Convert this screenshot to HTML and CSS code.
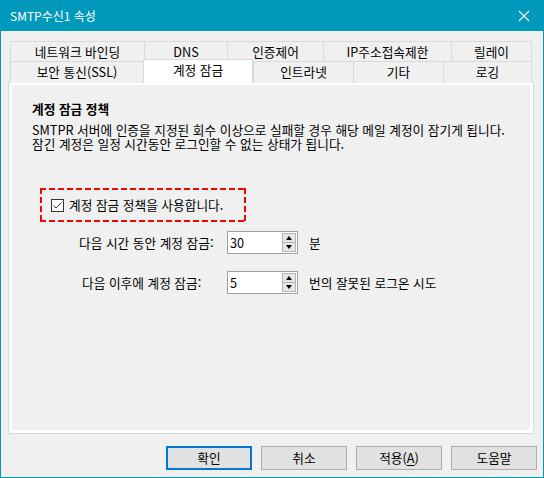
FILE: index.html
```html
<!DOCTYPE html>
<html lang="ko">
<head>
<meta charset="utf-8">
<title>SMTP수신1 속성</title>
<link rel="stylesheet" href="styles.css">
</head>
<body>
<div class="window">
  <div class="titlebar">
    <span class="title">SMTP수신1 속성</span>
    <svg class="close" width="12" height="12" viewBox="0 0 12 12"><path d="M1 1 L11 11 M11 1 L1 11" stroke="#fff" stroke-width="1.1" fill="none"/></svg>
  </div>
  <div class="content">
    <div class="tabs">
      <div class="tabrow row1">
        <div class="tab">네트워크 바인딩</div>
        <div class="tab">DNS</div>
        <div class="tab">인증제어</div>
        <div class="tab">IP주소접속제한</div>
        <div class="tab last">릴레이</div>
      </div>
      <div class="tabrow row2">
        <div class="tab">보안 통신(SSL)</div>
        <div class="tab selected">계정 잠금</div>
        <div class="tab">인트라넷</div>
        <div class="tab">기타</div>
        <div class="tab last">로깅</div>
      </div>
    </div>
    <div class="panel">
      <div class="page">
        <div class="heading">계정 잠금 정책</div>
        <div class="desc">SMTPR 서버에 인증을 지정된 회수 이상으로 실패할 경우 해당 메일 계정이 잠기게 됩니다.<br>잠긴 계정은 일정 시간동안 로그인할 수 없는 상태가 됩니다.</div>
        <div class="option">
          <svg class="checkbox" width="13" height="13" viewBox="0 0 13 13"><rect x="0.5" y="0.5" width="12" height="12" fill="#fff" stroke="#333"/><path d="M2.5 6.5 L5 9 L10.5 3.5" stroke="#333" stroke-width="1" fill="none"/></svg>
          <span class="optlabel">계정 잠금 정책을 사용합니다.</span>
        </div>
        <div class="field f1">
          <span class="flabel">다음 시간 동안 계정 잠금:</span>
          <div class="spin"><span class="val">30</span><div class="spinbtns"><div class="sbtn up"></div><div class="sbtn down"></div></div></div>
          <span class="unit">분</span>
        </div>
        <div class="field f2">
          <span class="flabel">다음 이후에 계정 잠금:</span>
          <div class="spin"><span class="val">5</span><div class="spinbtns"><div class="sbtn up"></div><div class="sbtn down"></div></div></div>
          <span class="unit">번의 잘못된 로그온 시도</span>
        </div>
      </div>
    </div>
    <div class="buttons">
      <div class="btn default">확인</div>
      <div class="btn">취소</div>
      <div class="btn">적용(<u>A</u>)</div>
      <div class="btn">도움말</div>
    </div>
  </div>
</div>
</body>
</html>
```
FILE: styles.css
```css
* { box-sizing: border-box; }
html, body { margin: 0; padding: 0; background: #f0f0f0; }
body {
  font-family: "Noto Sans CJK KR", "Noto Sans", sans-serif;
  font-size: 12.7px;
  color: #000;
}
.window {
  width: 544px;
  height: 478px;
  border: 1px solid #0099bc;
  border-top: 0;
  background: #f0f0f0;
  display: flex;
  flex-direction: column;
}
.titlebar {
  height: 31px;
  background: #0099bc;
  display: flex;
  align-items: center;
  justify-content: space-between;
  padding: 0 13px 0 9px;
  color: #fff;
}
.title { font-size: 12px; line-height: 16px; }
.close { display: block; }
.content { padding: 10px 0 0 0; }
.tabs { padding-left: 9px; }
.tabrow { display: grid; height: 20px; }
.row1 { grid-template-columns: 134px 83px 96px 128px 81px; }
.row2 { grid-template-columns: 133px 110px 100px 90px 89px; }
.tab {
  border-top: 1px solid #d9d9d9;
  border-left: 1px solid #d9d9d9;
  background: #f0f0f0;
  text-align: center;
  line-height: 19px;
  white-space: nowrap;
}
.tab.last { border-right: 1px solid #d9d9d9; }
.tab.selected {
  background: #fff;
  border-right: 1px solid #d9d9d9;
  margin-top: -2px;
  height: 24px;
  line-height: 20px;
  position: relative;
  z-index: 1;
}
.panel {
  margin-left: 7px;
  width: 526px;
  height: 353px;
  border: 1px solid #d9d9d9;
  background: #fff;
  padding: 3px;
}
.page {
  height: 100%;
  background: #f0f0f0;
  padding: 16px 20px;
}
.heading { font-weight: bold; line-height: 16px; }
.desc { margin-top: 6px; line-height: 14px; }
.option {
  margin-top: 37px;
  margin-left: 8px;
  width: 206px;
  height: 34px;
  padding-left: 11px;
  display: flex;
  align-items: center;
  gap: 5px;
  background:
    repeating-linear-gradient(90deg, #ff0000 0 6px, transparent 6px 9px) left top / 100% 2px no-repeat,
    repeating-linear-gradient(90deg, #ff0000 0 6px, transparent 6px 9px) left bottom / 100% 2px no-repeat,
    repeating-linear-gradient(180deg, #ff0000 0 6px, transparent 6px 9px) left top / 2px 100% no-repeat,
    repeating-linear-gradient(180deg, #ff0000 0 6px, transparent 6px 9px) right top / 2px 100% no-repeat;
}
.checkbox { display: block; flex: none; }
.optlabel { line-height: 16px; white-space: nowrap; }
.field { display: flex; align-items: center; }
.f1 { margin-top: 9px; }
.f2 { margin-top: 17px; }
.flabel { line-height: 16px; white-space: nowrap; }
.f1 .flabel { margin-left: 47px; width: 148px; }
.f2 .flabel { margin-left: 50px; width: 145px; }
.spin {
  width: 71px;
  height: 23px;
  border: 1px solid #a0a0a0;
  background: #fff;
  display: flex;
  align-items: center;
  justify-content: space-between;
  padding: 1px 1px 1px 2px;
}
.val { line-height: 16px; }
.spinbtns {
  width: 14px;
  height: 19px;
  display: flex;
  flex-direction: column;
}
.sbtn {
  flex: 1;
  background: #e6e6e6;
  border: 1px solid #b4b4b4;
  display: flex;
  align-items: center;
  justify-content: center;
}
.sbtn.up { border-bottom: 0; }
.sbtn.up::before {
  content: "";
  border-left: 3.5px solid transparent;
  border-right: 3.5px solid transparent;
  border-bottom: 4px solid #000;
}
.sbtn.down::before {
  content: "";
  border-left: 3.5px solid transparent;
  border-right: 3.5px solid transparent;
  border-top: 4px solid #000;
}
.unit { margin-left: 11px; line-height: 16px; white-space: nowrap; }
.buttons {
  margin-top: 12px;
  padding-right: 6px;
  display: flex;
  justify-content: flex-end;
  gap: 9px;
}
.btn {
  width: 86px;
  height: 24px;
  background: #e1e1e1;
  border: 1px solid #adadad;
  display: flex;
  align-items: center;
  justify-content: center;
  line-height: 16px;
}
.btn.default { border: 2px solid #0078d7; }
.btn u { text-underline-offset: 2px; }
```
